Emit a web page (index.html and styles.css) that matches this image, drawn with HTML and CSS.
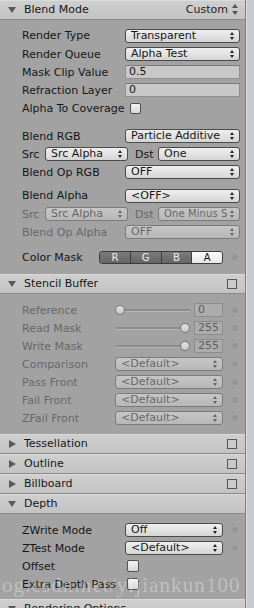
FILE: index.html
```html
<!DOCTYPE html>
<html lang="en">
<head>
    <meta charset="UTF-8">
    <title>Shader Options</title>
    <link rel="stylesheet" href="styles.css">
</head>
<body>
    <div class="inspector">
        <div class="panel">
            <!-- Blend Mode -->
            <div class="foldout"><span class="tri down"></span>Blend Mode<span class="hdr-popup">Custom</span></div>
            <div class="section blend">
                <div class="row tall"><span class="lbl">Render Type</span><div class="popup">Transparent</div></div>
                <div class="row"><span class="lbl">Render Queue</span><div class="popup">Alpha Test</div></div>
                <div class="row"><span class="lbl">Mask Clip Value</span><div class="field">0.5</div></div>
                <div class="row"><span class="lbl">Refraction Layer</span><div class="field">0</div></div>
                <div class="row"><span class="lbl auto">Alpha To Coverage</span><span class="check"></span></div>

                <div class="gap10"></div>
                <div class="row"><span class="lbl">Blend RGB</span><div class="popup">Particle Additive</div></div>
                <div class="row"><span class="lbl small">Src</span><div class="popup src">Src Alpha</div><span class="lbl small dst">Dst</span><div class="popup">One</div></div>
                <div class="row"><span class="lbl">Blend Op RGB</span><div class="popup">OFF</div></div>

                <div class="gap5"></div>
                <div class="row tall"><span class="lbl">Blend Alpha</span><div class="popup">&lt;OFF&gt;</div></div>
                <div class="row dis"><span class="lbl small">Src</span><div class="popup src">Src Alpha</div><span class="lbl small dst">Dst</span><div class="popup"><span class="txt">One Minus S</span></div></div>
                <div class="row dis"><span class="lbl">Blend Op Alpha</span><div class="popup">OFF</div></div>

                <div class="gap7"></div>
                <div class="row narrow"><span class="lbl mask">Color Mask</span>
                    <div class="seg"><span>R</span><span>G</span><span>B</span><span class="on">A</span></div>
                    <span class="dot"></span>
                </div>
            </div>

            <!-- Stencil -->
            <div class="foldout"><span class="tri down"></span>Stencil Buffer<span class="hdr-check"></span></div>
            <div class="section stencil">
                <div class="row narrow dis"><span class="lbl st">Reference</span><div class="slider"><span class="knob"></span></div><div class="field num">0</div><span class="dot"></span></div>
                <div class="row narrow dis"><span class="lbl st">Read Mask</span><div class="slider max"><span class="knob"></span></div><div class="field num">255</div><span class="dot"></span></div>
                <div class="row narrow dis"><span class="lbl st">Write Mask</span><div class="slider max"><span class="knob"></span></div><div class="field num">255</div><span class="dot"></span></div>
                <div class="row narrow dis"><span class="lbl st">Comparison</span><div class="popup">&lt;Default&gt;</div><span class="dot"></span></div>
                <div class="row narrow dis"><span class="lbl st">Pass Front</span><div class="popup">&lt;Default&gt;</div><span class="dot"></span></div>
                <div class="row narrow dis"><span class="lbl st">Fail Front</span><div class="popup">&lt;Default&gt;</div><span class="dot"></span></div>
                <div class="row narrow dis"><span class="lbl st">ZFail Front</span><div class="popup">&lt;Default&gt;</div><span class="dot"></span></div>
            </div>

            <div class="foldout"><span class="tri right"></span>Tessellation<span class="hdr-check"></span></div>
            <div class="foldout"><span class="tri right"></span>Outline<span class="hdr-check"></span></div>
            <div class="foldout"><span class="tri right"></span>Billboard<span class="hdr-check"></span></div>

            <!-- Depth -->
            <div class="foldout"><span class="tri down"></span>Depth</div>
            <div class="section depth">
                <div class="row narrow"><span class="lbl">ZWrite Mode</span><div class="popup">Off</div><span class="dot"></span></div>
                <div class="row narrow"><span class="lbl">ZTest Mode</span><div class="popup">&lt;Default&gt;</div><span class="dot"></span></div>
                <div class="row"><span class="lbl">Offset</span><span class="check big"></span></div>
                <div class="row"><span class="lbl">Extra Depth Pass</span><span class="check big"></span></div>
            </div>

            <div class="foldout"><span class="tri down"></span>Rendering Options</div>
        </div>
        <div class="scrollbar"></div>
        <div class="watermark">og.csdn.net/yijiankun100</div>
    </div>
</body>
</html>
```

FILE: styles.css
```css
body {
    margin: 0;
    width: 254px;
    height: 608px;
    overflow: hidden;
    background-color: #a2a2a2;
    font-family: "DejaVu Sans", sans-serif;
    font-size: 11px;
    color: #161616;
}

.inspector {
    display: flex;
    height: 608px;
    position: relative;
}

.panel {
    width: 245px;
    flex: none;
    border-right: 1px solid #7d7d7d;
    background-color: #a2a2a2;
}

.scrollbar {
    flex: 1;
    background-color: #c7c9d0;
    border-left: 1px solid #dcdee4;
}

/* foldout headers */
.foldout {
    display: flex;
    align-items: center;
    height: 19px;
    padding-left: 8px;
    background: linear-gradient(#cfcfcf, #c3c3c3);
    border-bottom: 1px solid #8b8b8b;
    box-shadow: inset 0 1px 0 #dadada;
    white-space: nowrap;
}

.tri {
    width: 0;
    height: 0;
    margin-right: 8px;
}

.tri.down {
    border-left: 4px solid transparent;
    border-right: 4px solid transparent;
    border-top: 6px solid #5a5a5a;
}

.tri.right {
    margin-left: 1px;
    margin-right: 8px;
    border-top: 4px solid transparent;
    border-bottom: 4px solid transparent;
    border-left: 7px solid #5a5a5a;
}

.hdr-popup {
    margin-left: auto;
    margin-right: 17px;
    color: #222;
    position: relative;
}

.hdr-popup::before,
.hdr-popup::after {
    content: "";
    position: absolute;
    right: -10px;
    border-left: 3px solid transparent;
    border-right: 3px solid transparent;
}

.hdr-popup::before {
    top: 1px;
    border-bottom: 4px solid #555;
}

.hdr-popup::after {
    bottom: 1px;
    border-top: 4px solid #555;
}

.hdr-check {
    margin-left: auto;
    margin-right: 8px;
    width: 10px;
    height: 10px;
    box-sizing: border-box;
    border: 1px solid #555;
    background-color: #c9c9c9;
}

/* sections */
.section.blend {
    padding: 6px 0 8px;
}

.section.stencil {
    padding: 7px 0 7px;
}

.section.depth {
    padding: 7px 0 6px;
}

.gap10 { height: 10px; }
.gap7 { height: 7px; }
.gap5 { height: 5px; }

.row {
    display: flex;
    align-items: center;
    height: 18px;
    padding-left: 22px;
    padding-right: 5px;
    white-space: nowrap;
}

.row.tall {
    height: 19px;
}

.row.narrow {
    padding-right: 7px;
}

.lbl {
    width: 103px;
    flex: none;
    overflow: hidden;
}

.lbl.auto {
    width: auto;
    margin-right: 5px;
}

.lbl.small {
    width: 23px;
}

.lbl.dst {
    margin-left: 7px;
}

.lbl.st {
    width: 93px;
}

.lbl.mask {
    width: 77px;
}

.popup {
    flex: 1;
    min-width: 0;
    height: 14px;
    box-sizing: border-box;
    border: 1px solid #4a4a4a;
    border-radius: 3px;
    background: linear-gradient(#efefef, #d5d5d5);
    padding-left: 5px;
    line-height: 12px;
    overflow: hidden;
    position: relative;
}

.popup .txt {
    font-size: 10px;
    letter-spacing: 0.1px;
}

.popup.src {
    flex: none;
    width: 83px;
}

.popup::before,
.popup::after {
    content: "";
    position: absolute;
    right: 5px;
    border-left: 2px solid transparent;
    border-right: 2px solid transparent;
}

.popup::before {
    top: 2px;
    border-bottom: 3px solid #222;
}

.popup::after {
    bottom: 2px;
    border-top: 3px solid #222;
}

.field {
    flex: 1;
    height: 14px;
    box-sizing: border-box;
    border: 1px solid #8f8f8f;
    border-top-color: #7c7c7c;
    background-color: #c8c8c8;
    padding-left: 3px;
    line-height: 12px;
}

.field.num {
    flex: none;
    width: 29px;
    margin-left: 4px;
}

.check {
    width: 11px;
    height: 11px;
    box-sizing: border-box;
    border: 1px solid #505050;
    border-radius: 2px;
    background: linear-gradient(#f3f3f3, #d7d7d7);
}

.check.big {
    width: 12px;
    height: 12px;
    margin-left: 2px;
}

.dot {
    width: 6px;
    height: 6px;
    margin-left: 9px;
    border-radius: 50%;
    background-color: #969696;
    flex: none;
}

/* color mask */
.seg {
    display: flex;
    width: 124px;
    height: 13px;
    box-sizing: border-box;
    border: 1px solid #3c3c3c;
    border-radius: 3px;
    overflow: hidden;
}

.seg span {
    flex: 1;
    text-align: center;
    font-size: 10px;
    line-height: 11px;
    color: #eee;
    background: linear-gradient(#7b7b7b, #666);
    border-left: 1px solid #3c3c3c;
}

.seg span:first-child {
    border-left: none;
}

.seg span.on {
    color: #111;
    background: linear-gradient(#fbfbfb, #e6e6e6);
}

/* slider */
.slider {
    display: flex;
    align-items: center;
    width: 75px;
    height: 10px;
    flex: none;
    background: linear-gradient(transparent 4px, #8c8c8c 4px, #8c8c8c 6px, #b6b6b6 6px, #b6b6b6 7px, transparent 7px);
}

.slider.max {
    justify-content: flex-end;
}

.knob {
    width: 10px;
    height: 10px;
    box-sizing: border-box;
    border-radius: 50%;
    border: 1px solid #747474;
    background: linear-gradient(#e2e2e2, #c6c6c6);
}

/* disabled rows */
.row.dis {
    color: #676767;
}

.row.dis .popup {
    border-color: #7b7b7b;
    background: linear-gradient(#c6c6c6, #b7b7b7);
    color: #676767;
}

.row.dis .popup::before {
    border-bottom-color: #666;
}

.row.dis .popup::after {
    border-top-color: #666;
}

.row.dis .field {
    background-color: #acacac;
    border-color: #8c8c8c;
    color: #5e5e5e;
}

.watermark {
    position: absolute;
    left: 2px;
    top: 573px;
    font-family: "Liberation Serif", serif;
    font-size: 21px;
    letter-spacing: 1.1px;
    color: rgba(255, 255, 255, 0.32);
    white-space: nowrap;
}
```
